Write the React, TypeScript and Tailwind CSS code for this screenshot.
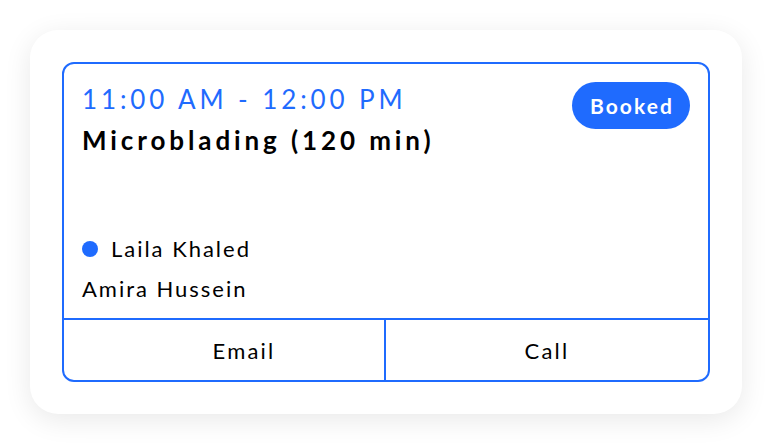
export default function App() {
    return (
        <div className="w-[772px] h-[444px] bg-white p-[30px] font-['Lato',sans-serif] text-black">
            {/* Outer card */}
            <div className="h-[384px] rounded-[28px] bg-white p-8 shadow-[0_6px_28px_rgba(0,0,0,0.09)]">
                {/* Appointment card */}
                <div className="h-[320px] flex flex-col rounded-[12px] border-2 border-[#1f6bfe] overflow-hidden">
                    <div className="flex-1 flex flex-col justify-between pt-[18px] px-[18px] pb-[15px]">
                        <div className="flex items-start justify-between">
                            <div>
                                <div className="text-[26px] leading-[34px] tracking-[0.15em] text-[#1f6bfe]">11:00 AM - 12:00 PM</div>
                                <div className="text-[26px] leading-[34px] tracking-[0.15em] font-bold mt-[7px]">Microblading (120 min)</div>
                            </div>
                            <span className="h-[47px] w-[118px] rounded-full bg-[#1f6bfe] text-white text-[21px] tracking-[0.1em] font-bold flex items-center justify-center pl-[2px]">
                                Booked
                            </span>
                        </div>
                        <div className="flex flex-col gap-[12px] text-[22px] leading-[28px] tracking-[0.09em]">
                            <div className="flex items-center gap-[13px]">
                                <span className="h-4 w-4 rounded-full bg-[#1f6bfe]"></span>
                                <span>Laila Khaled</span>
                            </div>
                            <div>Amira Hussein</div>
                        </div>
                    </div>
                    <div className="h-[62px] grid grid-cols-2 border-t-2 border-[#1f6bfe] text-[22px] tracking-[0.1em]">
                        <button className="border-r-2 border-[#1f6bfe] flex items-center justify-center pl-[40px]">Email</button>
                        <button className="flex items-center justify-center">Call</button>
                    </div>
                </div>
            </div>
        </div>
    );
}
